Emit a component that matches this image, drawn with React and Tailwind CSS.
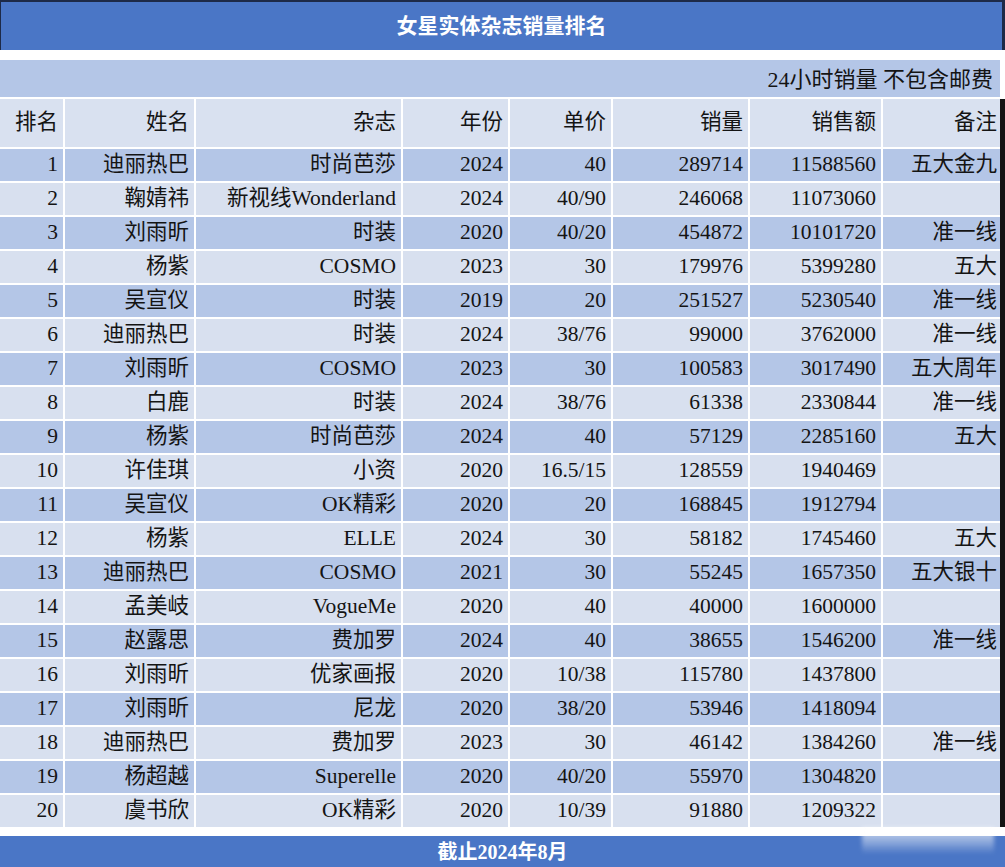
import React from "react";

const rows = [
  ["1", "迪丽热巴", "时尚芭莎", "2024", "40", "289714", "11588560", "五大金九"],
  ["2", "鞠婧祎", "新视线Wonderland", "2024", "40/90", "246068", "11073060", ""],
  ["3", "刘雨昕", "时装", "2020", "40/20", "454872", "10101720", "准一线"],
  ["4", "杨紫", "COSMO", "2023", "30", "179976", "5399280", "五大"],
  ["5", "吴宣仪", "时装", "2019", "20", "251527", "5230540", "准一线"],
  ["6", "迪丽热巴", "时装", "2024", "38/76", "99000", "3762000", "准一线"],
  ["7", "刘雨昕", "COSMO", "2023", "30", "100583", "3017490", "五大周年"],
  ["8", "白鹿", "时装", "2024", "38/76", "61338", "2330844", "准一线"],
  ["9", "杨紫", "时尚芭莎", "2024", "40", "57129", "2285160", "五大"],
  ["10", "许佳琪", "小资", "2020", "16.5/15", "128559", "1940469", ""],
  ["11", "吴宣仪", "OK精彩", "2020", "20", "168845", "1912794", ""],
  ["12", "杨紫", "ELLE", "2024", "30", "58182", "1745460", "五大"],
  ["13", "迪丽热巴", "COSMO", "2021", "30", "55245", "1657350", "五大银十"],
  ["14", "孟美岐", "VogueMe", "2020", "40", "40000", "1600000", ""],
  ["15", "赵露思", "费加罗", "2024", "40", "38655", "1546200", "准一线"],
  ["16", "刘雨昕", "优家画报", "2020", "10/38", "115780", "1437800", ""],
  ["17", "刘雨昕", "尼龙", "2020", "38/20", "53946", "1418094", ""],
  ["18", "迪丽热巴", "费加罗", "2023", "30", "46142", "1384260", "准一线"],
  ["19", "杨超越", "Superelle", "2020", "40/20", "55970", "1304820", ""],
  ["20", "虞书欣", "OK精彩", "2020", "10/39", "91880", "1209322", ""],
];

const headers = ["排名", "姓名", "杂志", "年份", "单价", "销量", "销售额", "备注"];

const font = {
  fontFamily: '"Liberation Serif", "Noto Sans CJK SC", serif',
};

const gridCols =
  "grid grid-cols-[63px_129px_205px_105px_101px_135px_131px_117px] gap-x-[2px]";

export default function App() {
  return (
    <div
      className="relative w-[1005px] h-[867px] bg-white text-[#141414] overflow-hidden"
      style={font}
    >
      {/* Title */}
      <div className="h-[50px] bg-[#4a76c6] border-t-2 border-l border-r-[3px] border-[#1d2a48] flex items-center justify-center">
        <span className="text-white font-bold text-[21px] leading-none">
          女星实体杂志销量排名
        </span>
      </div>
      <div className="h-[10px]" />
      <div className="flex">
        <div className="w-[1000px] flex flex-col">
          {/* Subheader */}
          <div className="h-[37px] bg-[#b4c6e7] flex items-center justify-end pr-[7px] pt-[3px]">
            <span className="text-[22px] leading-none">24小时销量 不包含邮费</span>
          </div>
          <div className="h-[2px]" />
          {/* Header */}
          <div className={`${gridCols} h-[48px]`}>
            {headers.map((h, i) => (
              <div
                key={i}
                className={`bg-[#d9e1f0] flex items-center justify-end text-[21.5px] leading-none ${
                  i === 7 ? "pr-[3px]" : "pr-[5px]"
                }`}
              >
                {h}
              </div>
            ))}
          </div>
          <div className="h-[2px]" />
          {/* Rows */}
          <div className="flex flex-col gap-y-[2px]">
            {rows.map((r, ri) => (
              <div key={ri} className={`${gridCols} h-[32px]`}>
                {r.map((c, ci) => (
                  <div
                    key={ci}
                    className={`${
                      ri % 2 === 0 ? "bg-[#b4c6e7]" : "bg-[#d8e0ef]"
                    } flex items-center justify-end text-[21.5px] leading-none whitespace-nowrap ${
                      ci === 7 ? "pr-[3px]" : "pr-[5px]"
                    }`}
                  >
                    {c}
                  </div>
                ))}
              </div>
            ))}
          </div>
        </div>
        <div className="w-[5px] flex flex-col">
          <div className="h-[39px] bg-white" />
          <div className="flex-1 bg-[#141414]" />
        </div>
      </div>
      <div className="h-[9px]" />
      {/* Footer */}
      <div className="h-[31px] bg-[#4a76c6] flex items-center justify-center">
        <span className="text-white font-bold text-[20px] leading-none">截止2024年8月</span>
      </div>
      {/* watermark */}
      <div className="absolute left-[862px] top-[828px] w-[132px] h-[26px] bg-gradient-to-b from-white/90 via-white/50 to-white/0 blur-[2px] opacity-80" />
    </div>
  );
}
